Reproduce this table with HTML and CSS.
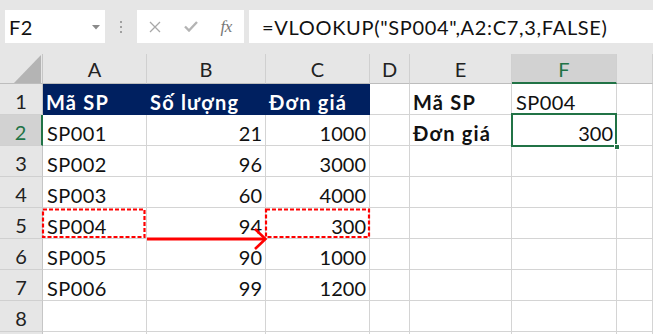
FILE: index.html
```html
<!DOCTYPE html>
<html lang="vi">
<head>
<meta charset="utf-8">
<title>VLOOKUP</title>
<link rel="stylesheet" href="styles.css">
</head>
<body>
<div class="toolbar">
  <div class="namebox">
    <span class="ref">F2</span>
    <svg class="dd" width="8" height="5" viewBox="0 0 8 5"><polygon points="0,0 8,0 4,4.5" fill="#8a8a8a"/></svg>
  </div>
  <div class="grip"><span></span><span></span><span></span></div>
  <div class="btnbox">
    <span class="btn"><svg width="12" height="12" viewBox="0 0 12 12"><path d="M1 1 L11 11 M11 1 L1 11" stroke="#a8a8a8" stroke-width="1.3" fill="none"/></svg></span>
    <span class="btn"><svg width="14" height="11" viewBox="0 0 14 11"><path d="M1 5.5 L5 9.5 L13 1" stroke="#b4b4b4" stroke-width="2.4" fill="none"/></svg></span>
    <span class="btn fx">fx</span>
  </div>
  <div class="formula">=VLOOKUP("SP004",A2:C7,3,FALSE)</div>
</div>

<div class="sheet">
  <div class="grid">
    <div class="corner"><svg width="28" height="28" viewBox="0 0 28 28"><polygon points="27,0 27,28 0,28" fill="#b4b4b4"/></svg></div>
    <div class="ch">A</div><div class="ch">B</div><div class="ch">C</div><div class="ch">D</div><div class="ch">E</div><div class="ch sel">F</div><div class="ch"></div>

    <div class="rh">1</div>
    <div class="c hd">Mã SP</div><div class="c hd">Số lượng</div><div class="c hd">Đơn giá</div><div class="c"></div><div class="c b">Mã SP</div><div class="c">SP004</div><div class="c"></div>

    <div class="rh sel">2</div>
    <div class="c">SP001</div><div class="c r">21</div><div class="c r">1000</div><div class="c"></div><div class="c b">Đơn giá</div><div class="c r active">300<span class="handle"></span></div><div class="c"></div>

    <div class="rh">3</div>
    <div class="c">SP002</div><div class="c r">96</div><div class="c r">3000</div><div class="c"></div><div class="c"></div><div class="c"></div><div class="c"></div>

    <div class="rh">4</div>
    <div class="c">SP003</div><div class="c r">60</div><div class="c r">4000</div><div class="c"></div><div class="c"></div><div class="c"></div><div class="c"></div>

    <div class="rh">5</div>
    <div class="c">SP004</div><div class="c r">94</div><div class="c r">300</div><div class="c"></div><div class="c"></div><div class="c"></div><div class="c"></div>

    <div class="rh">6</div>
    <div class="c">SP005</div><div class="c r">90</div><div class="c r">1000</div><div class="c"></div><div class="c"></div><div class="c"></div><div class="c"></div>

    <div class="rh">7</div>
    <div class="c">SP006</div><div class="c r">99</div><div class="c r">1200</div><div class="c"></div><div class="c"></div><div class="c"></div><div class="c"></div>

    <div class="rh">8</div>
    <div class="c"></div><div class="c"></div><div class="c"></div><div class="c"></div><div class="c"></div><div class="c"></div><div class="c"></div>

    <div class="rh"></div>
    <div class="c"></div><div class="c"></div><div class="c"></div><div class="c"></div><div class="c"></div><div class="c"></div><div class="c"></div>
  </div>

  <svg class="marks" width="653" height="280" viewBox="0 54 653 280">
    <rect x="43" y="209.5" width="101.5" height="27.5" fill="none" stroke="#ff0000" stroke-width="2.2" stroke-dasharray="4 2"/>
    <rect x="266" y="209.5" width="103" height="27.5" fill="none" stroke="#ff0000" stroke-width="2.2" stroke-dasharray="4 2"/>
    <line x1="147" y1="239" x2="265" y2="239" stroke="#ff0000" stroke-width="3"/>
    <polyline points="255,229 265.5,239 255,249" fill="none" stroke="#ff0000" stroke-width="2.6"/>
  </svg>
</div>
</body>
</html>
```

FILE: styles.css
```css
* { box-sizing: border-box; }
html, body {
  margin: 0;
  padding: 0;
  width: 653px;
  height: 334px;
  overflow: hidden;
  background: #e6e6e6;
  font-family: Lato, "Noto Sans", sans-serif;
  color: #111;
}
.toolbar {
  display: flex;
  height: 54px;
  padding: 10px 0 0 5px;
}
.namebox {
  width: 100px;
  height: 33px;
  background: #fff;
  display: flex;
  align-items: flex-start;
  justify-content: space-between;
  padding: 5px 4px 0 4px;
  font-size: 20px;
  line-height: 24px;
  letter-spacing: 0.5px;
}
.namebox .dd { margin-top: 10px; margin-right: 1px; }
.grip {
  width: 32px;
  display: flex;
  flex-direction: column;
  align-items: center;
  padding-top: 11px;
  gap: 3px;
}
.grip span {
  width: 2px;
  height: 2px;
  background: #a0a0a0;
}
.btnbox {
  width: 107px;
  height: 33px;
  background: #fff;
  display: flex;
  align-items: center;
}
.btn {
  width: 36px;
  display: flex;
  justify-content: center;
  align-items: center;
}
.btn.fx {
  font-family: "Liberation Serif", "DejaVu Serif", serif;
  font-style: italic;
  font-size: 17px;
  color: #777;
  letter-spacing: -0.5px;
}
.formula {
  flex: 1;
  margin-left: 5px;
  height: 33px;
  background: #fff;
  padding: 5px 0 0 13px;
  font-size: 20px;
  line-height: 24px;
  letter-spacing: 0.68px;
  white-space: nowrap;
}
.sheet {
  position: relative;
  height: 280px;
  overflow: hidden;
  background: #fff;
}
.grid {
  display: grid;
  grid-template-columns: 43px 104px 119px 104px 40px 102px 105px 1fr;
  grid-template-rows: 30px repeat(9, 31px);
  font-size: 20px;
}
.grid > div {
  border-right: 1px solid #d4d4d4;
  border-bottom: 1px solid #d4d4d4;
  white-space: nowrap;
  overflow: hidden;
}
.corner {
  background: #e6e6e6;
  border-right-color: #c6c6c6 !important;
  border-bottom-color: #bdbdbd !important;
  display: flex;
  align-items: flex-end;
  justify-content: flex-end;
}
.corner svg { display: block; }
.ch {
  background: #e6e6e6;
  border-right-color: #d0d0d0 !important;
  border-bottom-color: #bdbdbd !important;
  text-align: center;
  line-height: 24px;
  padding-top: 3px;
  color: #222;
}
.ch.sel {
  background: #d2d2d2;
  color: #217346;
  border-bottom: 2px solid #217346 !important;
}
.rh {
  background: #e6e6e6;
  border-right-color: #c6c6c6 !important;
  border-bottom-color: #d0d0d0 !important;
  text-align: center;
  line-height: 24px;
  padding-top: 5px;
  color: #222;
}
.rh.sel {
  background: #d2d2d2;
  color: #217346;
  border-right: 2px solid #217346 !important;
}
.c {
  padding: 6px 4px 0 4px;
  line-height: 24px;
  background: #fff;
  letter-spacing: 0.4px;
}
.c.r { text-align: right; padding-right: 3px; letter-spacing: 0; }
.c.b { font-weight: 700; padding-left: 3px; letter-spacing: 1.2px; }
.c.hd {
  background: #002060;
  color: #fff;
  font-weight: 700;
  border-color: #002060 !important;
  padding-left: 3px;
  letter-spacing: 1.2px;
}
.c.active {
  position: relative;
  overflow: visible;
  z-index: 2;
}
.c.active::after {
  content: "";
  position: absolute;
  top: -2px;
  left: -1px;
  right: -1px;
  bottom: -2px;
  border: 2px solid #217346;
}
.handle {
  position: absolute;
  right: -4px;
  bottom: -5px;
  width: 6px;
  height: 6px;
  background: #217346;
  border: 1px solid #fff;
  z-index: 3;
}
.marks {
  position: absolute;
  top: 0;
  left: 0;
  pointer-events: none;
}
```
